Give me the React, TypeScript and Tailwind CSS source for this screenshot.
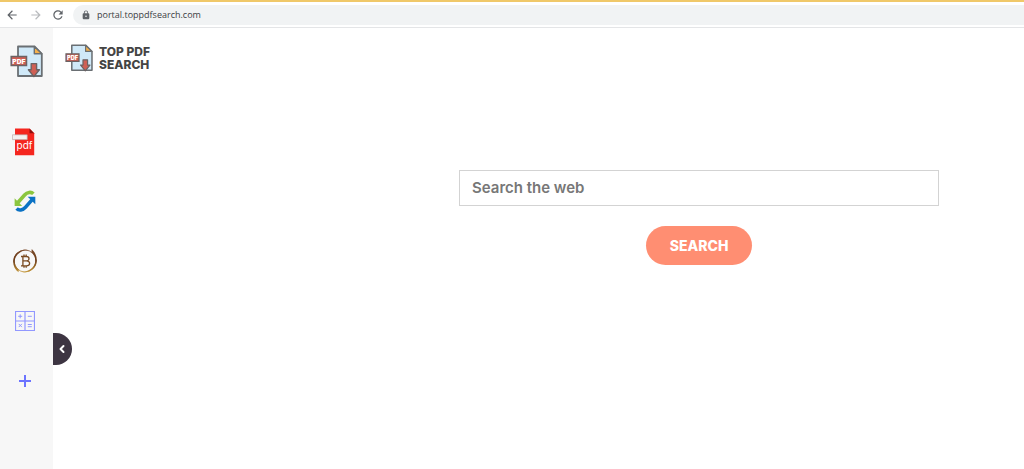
import { useState } from 'react';
import type { FormEvent, ReactNode } from 'react';
import { ChevronLeft } from 'lucide-react';
import { MdArrowBack, MdArrowForward, MdLock, MdRefresh } from 'react-icons/md';

function PdfDownloadIcon({ className }: { className: string }) {
  return (
    <svg viewBox="0 0 33 33" className={className} aria-hidden="true">
      <path d="M8 1.5h16.500l7.300 7.300v22.200H8z" fill="#d0e9f8" stroke="#6a6f73" strokeWidth="1.8" strokeLinejoin="round" />
      <path d="M24.300 1.500v7.300h7.500z" fill="#f5b14c" stroke="#6a6f73" strokeWidth="1.4" strokeLinejoin="round" />
      <path d="M1.200 11.600h15.300v8.800H1.200z" fill="#cf5f54" stroke="#6a6263" strokeWidth="1.5" />
      <text x="8.8" y="18.600" textAnchor="middle" fontFamily="Inter, sans-serif" fontSize="6.600" fontWeight="900" fill="#fff">PDF</text>
      <path d="M21.200 18.600h5.400v6.200h2.800l-5.500 6.800-5.500-6.800h2.800z" fill="#cf5f54" stroke="#6a6263" strokeWidth="1.4" strokeLinejoin="round" />
    </svg>
  );
}

function PdfFileIcon() {
  return (
    <svg viewBox="0 -2 26 30" className="h-[30px] w-[26px]" aria-hidden="true">
      <path d="M3 .5h14.500l4.700 4.800v21.900H3z" fill="#f5261f" />
      <path d="M17.500 .5v4.800h4.700z" fill="#8f0f0c" />
      <path d="M.4 6.800h14.800v4.800H.4z" fill="#f4f1f1" stroke="#bfa9a9" strokeWidth=".7" />
      <text x="12.600" y="20.800" textAnchor="middle" fontFamily="Inter, sans-serif" fontSize="10" fill="#fff">pdf</text>
    </svg>
  );
}

function ConvertIcon() {
  return (
    <svg viewBox="0 0 22 22" className="size-[22px]" aria-hidden="true">
      <path d="M3.500 13 10.600 5c2.600-3 6.600-3.400 8.800-1.200" fill="none" stroke="#8cc63f" strokeWidth="3.6" />
      <path d="M.6 8.300v7.600h7.600z" fill="#8cc63f" />
      <path d="M18.400 9.400 11.400 17.400c-2.600 3-6.600 3.400-8.800 1.200" fill="none" stroke="#0b72c4" strokeWidth="3.6" />
      <path d="M21.300 14.300V6.700h-7.600z" fill="#0b72c4" />
    </svg>
  );
}

function BitcoinIcon() {
  return (
    <svg viewBox="0 0 26 26" className="size-[26px]" aria-hidden="true">
      <defs>
        <linearGradient id="coin" x1="0" y1="0" x2="0" y2="1">
          <stop offset="0" stopColor="#7a4a2a" />
          <stop offset=".5" stopColor="#6b3a16" />
          <stop offset="1" stopColor="#c79a3c" />
        </linearGradient>
      </defs>
      <circle cx="13" cy="13" r="11" fill="none" stroke="url(#coin)" strokeWidth=".8" />
      <path d="M16 2C9 .6 1.600 5 1.200 12.800.9 17.500 3 21.500 6.500 24.200l.3-2.600C3.800 19 2.600 16 2.800 12.600 3.200 6.800 9 2.400 16 2z" fill="url(#coin)" />
      <path d="M10 24c7 1.400 14.400-3 14.800-10.800.3-4.700-1.500-8.700-5-12.200l-.4 3.100c3 2.600 4 5.600 3.800 9.300C22.800 19.200 17 23.600 10 24z" fill="url(#coin)" />
      <path d="M9 8.500h5.200c3.800 0 3.600 4.200.3 4.400 4.200.2 4.200 5-.2 5H9M10.900 8.500v9.400M11.500 12.900h3M12 6.500v2M14.200 6.500v2M12 18v1.800M14.200 18v1.800" fill="none" stroke="#7a4a20" strokeWidth="1.3" />
    </svg>
  );
}

function CalculatorIcon() {
  return (
    <svg viewBox="0 0 20 20" className="size-5" fill="none" stroke="#9298ff" aria-hidden="true">
      <path d="M.5.5h19v19H.5zM10 .5v19M.5 10h19" strokeWidth="1.2" />
      <path d="M3.200 5.300h4M5.200 3.300v4M12.800 5.300h4M3.700 12.900l3.200 3.200M6.900 12.900l-3.200 3.200M12.800 13.500h4M12.800 15.700h4" strokeWidth="1" />
    </svg>
  );
}

function PlusIcon() {
  return (
    <svg viewBox="0 0 12 12" className="size-3" stroke="#6c74ff" strokeWidth="2" aria-hidden="true">
      <path d="M6 0v12M0 6h12" />
    </svg>
  );
}

const shortcuts: { label: string; icon: ReactNode }[] = [
  { label: 'PDF', icon: <PdfFileIcon /> },
  { label: 'Convert', icon: <ConvertIcon /> },
  { label: 'Bitcoin', icon: <BitcoinIcon /> },
  { label: 'Calculator', icon: <CalculatorIcon /> },
];

function BrowserBar() {
  return (
    <div className="flex h-7 items-center border-t-2 border-b border-t-[#f0c869] border-b-[#e4e5e7] bg-white pl-[5px] text-[#5f6368]">
      <button type="button" aria-label="Back" className="mr-2.5"><MdArrowBack className="size-3.5" /></button>
      <button type="button" aria-label="Forward" className="mr-2 text-[#b8babd]"><MdArrowForward className="size-3.5" /></button>
      <button type="button" aria-label="Reload" className="mr-2"><MdRefresh className="size-3.5" /></button>
      <div className="flex h-5 flex-1 items-center rounded-l-full bg-[#f1f3f4] pl-2">
        <MdLock className="size-2.5" />
        <input
          type="text"
          aria-label="Address"
          defaultValue="portal.toppdfsearch.com"
          className="ml-1.5 flex-1 bg-transparent font-['Open_Sans',sans-serif] text-[9px] leading-4 text-[#3c4043] outline-none"
        />
      </div>
    </div>
  );
}

export default function App() {
  const [query, setQuery] = useState('');
  const [open, setOpen] = useState(true);

  const handleSearch = (e: FormEvent) => {
    e.preventDefault();
  };

  return (
    <div className="flex min-h-screen flex-col bg-white font-[Inter,sans-serif]">
      <BrowserBar />
      <div className="flex flex-1">
        {open && (
          <nav className="flex w-[53px] shrink-0 flex-col items-center bg-[#f7f7f7] pt-[17px]">
            <a href="#home" aria-label="Home" className="mb-[33px]">
              <PdfDownloadIcon className="size-[33px]" />
            </a>
            {shortcuts.map((s) => (
              <a key={s.label} href="#" aria-label={s.label} className="flex h-[60px] w-full items-center justify-center pr-1">
                {s.icon}
              </a>
            ))}
            <button type="button" aria-label="Add shortcut" className="flex h-[60px] w-full items-center justify-center pr-1">
              <PlusIcon />
            </button>
          </nav>
        )}

        <main className="relative flex-1">
          <button
            type="button"
            aria-label="Toggle sidebar"
            onClick={() => setOpen(!open)}
            className="absolute top-[305px] left-0 flex h-8 w-[19px] items-center justify-center rounded-r-full bg-[#3d3542] pr-0.5 text-white"
          >
            <ChevronLeft className="size-3" strokeWidth={4} />
          </button>

          <a href="#home" className="flex items-center gap-1.5 pt-4 pl-3 text-[#444]">
            <PdfDownloadIcon className="size-7" />
            <span className="text-[12px] leading-[13px] font-extrabold">
              TOP PDF
              <br />
              SEARCH
            </span>
          </a>

          <form onSubmit={handleSearch} className="mt-[98px] mr-[85px] ml-[406px] flex flex-col items-center gap-5">
            <input
              type="text"
              aria-label="Search the web"
              placeholder="Search the web"
              value={query}
              onChange={(e) => setQuery(e.target.value)}
              className="h-9 w-full border border-[#d3d3d3] px-3 pb-0.5 text-[15px] font-semibold text-[#444] outline-none placeholder:text-[#777]"
            />
            <button type="submit" className="rounded-full bg-[#ff8e72] px-6 py-2.5 text-[14px] leading-[19px] font-extrabold text-white">
              SEARCH
            </button>
          </form>
        </main>
      </div>
    </div>
  );
}
